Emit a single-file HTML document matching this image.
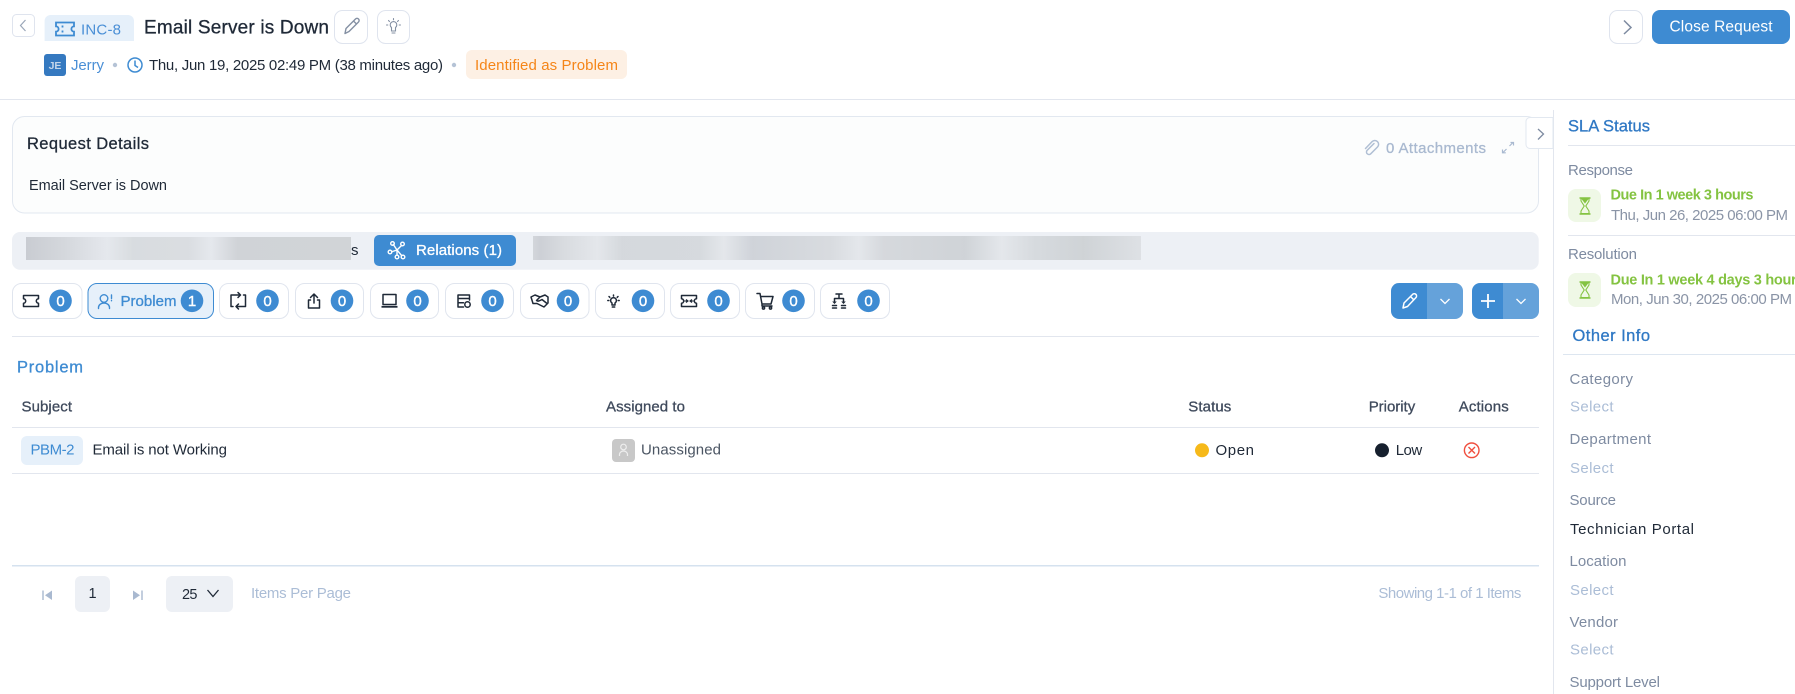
<!DOCTYPE html>
<html lang="en"><head><meta charset="utf-8"><title>INC-8 Email Server is Down</title>
<style>
html,body{margin:0;padding:0;background:#fff;width:1795px;height:694px;overflow:hidden}
svg{display:block;font-family:"Liberation Sans",sans-serif}
text{font-size:15px;fill:#1f2937}
.m{stroke-width:.3px;paint-order:stroke}
.lab{fill:#7e8ba1}.sel{fill:#abbdd6}
.ln{stroke:#e2e6ee;stroke-width:1;fill:none}
.chip{fill:#fff;stroke:#e0e5ee;stroke-width:1}
.bd{fill:#3e8bd2}
.n{fill:#fff;stroke:#fff;stroke-width:.4px;font-size:15px;text-anchor:middle}
.ic{fill:none;stroke:#1f2937;stroke-width:1.5;stroke-linecap:round;stroke-linejoin:round}
</style></head><body>
<svg width="1795" height="694" viewBox="0 0 1795 694" xmlns="http://www.w3.org/2000/svg">
<defs>
<linearGradient id="b1"><stop offset="0" stop-color="#c5c8ce"/><stop offset=".12" stop-color="#d2d5da"/><stop offset=".25" stop-color="#e4e7ec"/><stop offset=".33" stop-color="#d6dadd"/><stop offset=".5" stop-color="#d8dbdf"/><stop offset=".57" stop-color="#e4e7ec"/><stop offset=".65" stop-color="#cdd0d4"/><stop offset="1" stop-color="#ced1d4"/></linearGradient>
<linearGradient id="b2"><stop offset="0" stop-color="#d0d3d8"/><stop offset=".012" stop-color="#c9ccd2"/><stop offset=".05" stop-color="#d6d9dd"/><stop offset=".106" stop-color="#e3e6ea"/><stop offset=".146" stop-color="#d2d6da"/><stop offset=".274" stop-color="#d3d7db"/><stop offset=".314" stop-color="#e3e6ea"/><stop offset=".361" stop-color="#ccd0d6"/><stop offset=".49" stop-color="#d6d9dd"/><stop offset=".536" stop-color="#e3e6ea"/><stop offset=".576" stop-color="#d3d6da"/><stop offset=".71" stop-color="#ccd0d4"/><stop offset=".771" stop-color="#e3e6ea"/><stop offset=".825" stop-color="#d4d8dc"/><stop offset=".905" stop-color="#ccd0d3"/><stop offset="1" stop-color="#dcdfe3"/></linearGradient>
<g id="hg"><path d="M-5.500 -8H5.500M-5.500 8H5.500" stroke="#84c341" stroke-width="1.600" fill="none"/><path d="M-4 -7.500H4L4 -5L.8 0L4 5V7.500H-4V5L-.8 0L-4 -5Z" stroke="#84c341" stroke-width="1.100" fill="none"/><path d="M-3.500 -7H3.500L0 -2.500Z" fill="#84c341"/></g>
<path id="tk" d="M-9 -6.500H9V-2.600a2.600 2.600 0 0 0 0 5.200V6.500H-9V2.600a2.600 2.600 0 0 0 0-5.200ZM-2.500 -3.500V-1.500M-2.500 1.500V3.500"/>
<path id="tks" d="M-7.500 -5.500H7.500V-2.200a2.200 2.200 0 0 0 0 4.400V5.500H-7.500V2.200a2.200 2.200 0 0 0 0-4.400Z"/>
<path id="chv" d="M-4.500 -2.500L0 2L4.500 -2.500"/>
</defs>

<!-- header -->
<rect x="12.500" y="14.500" width="22" height="22" rx="4" fill="#fff" stroke="#dfe4ee"/>
<path d="M25.500 20L20.500 25.500L25.500 31" fill="none" stroke="#9aa6b8" stroke-width="1.200"/>
<path d="M44.600 41V21a6 6 0 0 1 6-6H128a6 6 0 0 1 6 6V41Z" fill="#e6f0fa"/>
<use href="#tk" x="65" y="29" fill="none" stroke="#3e8bd2" stroke-width="1.800"/>
<text x="81" y="34.500" textLength="40" style="fill:#4a8fd6">INC-8</text>
<text x="144" y="33.500" textLength="185" style="font-size:19px" class="m" stroke="#1f2937">Email Server is Down</text>
<rect x="334.500" y="10.500" width="33" height="33" rx="8" fill="#fff" stroke="#dfe4ee"/>
<path d="M345 33.500L346 28.500L355.500 19A2 2 0 0 1 358.500 22L349 31.500ZM353.500 21L356.500 24" fill="none" stroke="#8490a3" stroke-width="1.400" stroke-linejoin="round"/>
<rect x="377.500" y="10.500" width="32" height="33" rx="8" fill="#fff" stroke="#dfe4ee"/>
<path d="M391.500 27.500a3.300 3.300 0 1 1 4 0V31h-4ZM392 33h3M393.500 18.500v1.300M388.500 20.500l1 1M398.500 20.500l-1 1M386.500 25h1.300M399.200 25h1.300" fill="none" stroke="#8490a3" stroke-width="1.100" stroke-linecap="round"/>
<rect x="44" y="54" width="22" height="22" rx="3" fill="#3579c0"/>
<text x="55" y="69" text-anchor="middle" style="font-size:10.500px;fill:#c4d6ea;font-weight:700">JE</text>
<text x="71" y="70" textLength="33" style="fill:#4a8fd6">Jerry</text>
<circle cx="115" cy="65" r="2.200" fill="#b5c3d6"/>
<circle cx="135" cy="65" r="7" fill="none" stroke="#3e8bd2" stroke-width="1.500"/>
<path d="M135 60.500V65.500L138 67.500" fill="none" stroke="#3e8bd2" stroke-width="1.500"/>
<text x="149" y="70" textLength="294">Thu, Jun 19, 2025 02:49 PM (38 minutes ago)</text>
<circle cx="454" cy="65" r="2.200" fill="#b5c3d6"/>
<rect x="466" y="50" width="161" height="29" rx="6" fill="#fdf0e4"/>
<text x="475" y="70" textLength="143" style="fill:#f58518">Identified as Problem</text>
<rect x="1609.500" y="10.500" width="33" height="33" rx="8" fill="#fff" stroke="#dfe4ee"/>
<path d="M1624 20.500L1631 27.500L1624 34" fill="none" stroke="#7e8ba1" stroke-width="1.500"/>
<rect x="1652" y="10" width="138" height="34" rx="8" fill="#3e8bd2"/>
<text x="1669.500" y="31.700" textLength="103" style="fill:#fff;font-size:15.500px">Close Request</text>
<path d="M0 99.500H1795" class="ln"/>
<path d="M1553.500 110V694" class="ln"/>

<!-- request details -->
<rect x="12.500" y="116.500" width="1526" height="96.500" rx="12" fill="#fcfdfd" stroke="#e2e8f0"/>
<text x="27" y="149" textLength="122" class="m" stroke="#1f2937" style="font-size:16.500px">Request Details</text>
<text x="29" y="190" textLength="138" style="font-size:14.500px">Email Server is Down</text>
<path d="M1374 143.500L1367 150.500a2.500 2.500 0 0 0 3.500 3.500L1377.500 147a3.800 3.800 0 0 0 -5.400-5.400L1365.500 148.500" fill="none" stroke="#b0bfd4" stroke-width="1.500" stroke-linecap="round"/>
<text x="1386" y="153" textLength="100" class="m" stroke="#a9b9d0" style="fill:#a9b9d0">0 Attachments</text>
<path d="M1503 152.500L1506.500 149M1509.500 146L1513 142.500M1510.500 142.500H1513.500V145.500M1502.500 149.500V152.800H1505.800" fill="none" stroke="#a9b9d0" stroke-width="1.200"/>
<path d="M1553 117.500H1530a4 4 0 0 0 -4 4V144.500a4 4 0 0 0 4 4H1553Z" fill="#fff" stroke="#e2e8f0"/>
<path d="M1538 129L1543.500 134L1538 139.500" fill="none" stroke="#7e8ba1" stroke-width="1.300"/>

<!-- tabs -->
<rect x="12" y="232" width="1526.700" height="37.700" rx="8" fill="#edf0f5"/>
<text x="351" y="255" textLength="6">s</text>
<rect x="26" y="237" width="325" height="23" fill="url(#b1)" fill-opacity=".9"/>
<rect x="374" y="235" width="142" height="31" rx="5" fill="#3e8bd2"/>
<g fill="none" stroke="#fff" stroke-width="1.400"><path d="M397 250L393 244M397 250L402 245M397 250L391 252M397 250L397 255M397 250L402 256"/><circle cx="392.500" cy="243.500" r="1.800"/><circle cx="402.500" cy="244" r="1.800"/><circle cx="390" cy="252" r="1.800"/><circle cx="397" cy="257" r="1.800"/><circle cx="403" cy="257" r="1.800"/></g>
<text x="416" y="255" textLength="86" class="m" stroke="#fff" style="fill:#fff">Relations (1)</text>
<rect x="533" y="236" width="608" height="24" fill="url(#b2)" fill-opacity=".9"/>

<!-- chips -->
<rect class="chip" x="12.500" y="283.500" width="69.500" height="35" rx="9"/>
<use href="#tks" x="31" y="301" class="ic"/>
<circle class="bd" cx="60.500" cy="300.800" r="11.300"/><text class="n" x="60.500" y="306">0</text>

<rect x="88" y="283.500" width="125.500" height="35" rx="9" fill="#e6f0fa" stroke="#3e8bd2"/>
<g fill="none" stroke="#3e8bd2" stroke-width="1.400" stroke-linecap="round"><circle cx="104" cy="298.500" r="3.800"/><path d="M98.500 308.500v-1a5.500 4.500 0 0 1 11 0v1M111.500 295v3.500M111.500 300.500v.3"/></g>
<text x="120.500" y="306" textLength="56" class="m" stroke="#3e8bd2" style="fill:#3e8bd2">Problem</text>
<circle class="bd" cx="192" cy="300.800" r="11.300"/><text class="n" x="192" y="306">1</text>

<rect class="chip" x="219.500" y="283.500" width="69" height="35" rx="9"/>
<path class="ic" d="M231 306.500V295H240.500M238 292.500L240.500 295L238 297.500M243.500 295H245.500V306.500H236M238.500 304L236 306.500L238.500 309M231 306.500H233"/>
<circle class="bd" cx="267.500" cy="300.800" r="11.300"/><text class="n" x="267.500" y="306">0</text>

<rect class="chip" x="295.500" y="283.500" width="68" height="35" rx="9"/>
<path class="ic" d="M314 303V294M310.500 297.500L314 294L317.500 297.500M310.500 300H308.500V308H319.500V300H317.500"/>
<circle class="bd" cx="342" cy="300.800" r="11.300"/><text class="n" x="342" y="306">0</text>

<rect class="chip" x="370.500" y="283.500" width="68" height="35" rx="9"/>
<path class="ic" d="M383 294.500H396V304.500H383Z"/><path d="M381.500 306.800H397.500" stroke="#1f2937" stroke-width="1.800" fill="none"/>
<circle class="bd" cx="417.500" cy="300.800" r="11.300"/><text class="n" x="417.500" y="306">0</text>

<rect class="chip" x="445.500" y="283.500" width="68" height="35" rx="9"/>
<path class="ic" d="M469.500 300V295H458V307H463.500M458 298.500H469.500M458 302.800H463.500" stroke-width="1.300"/><circle class="ic" cx="467.500" cy="304.500" r="2.700" stroke-width="1.300"/>
<circle class="bd" cx="492.500" cy="300.800" r="11.300"/><text class="n" x="492.500" y="306">0</text>

<rect class="chip" x="520.500" y="283.500" width="68.500" height="35" rx="9"/>
<path class="ic" d="M531 297L535 295L540 297L545 295L548 297V303L544 307L537 303.500L533 303.500ZM540 297L536.500 300.500C538 302 540 300.500 542 299.500L547 303.500" stroke-width="1.300"/>
<circle class="bd" cx="568" cy="300.800" r="11.300"/><text class="n" x="568" y="306">0</text>

<rect class="chip" x="595.500" y="283.500" width="69" height="35" rx="9"/>
<path class="ic" d="M612 303a2.900 2.900 0 1 1 3 0V305H612ZM612.300 307H614.700M613.500 295V296M609 296.500L609.800 297.300M618 296.500L617.200 297.300M607.800 300.500H608.800M618.200 300.500H619.200" stroke-width="1.100"/>
<circle class="bd" cx="643" cy="300.800" r="11.300"/><text class="n" x="643" y="306">0</text>

<rect class="chip" x="670.500" y="283.500" width="69" height="35" rx="9"/>
<use href="#tks" x="689" y="301" class="ic"/><path d="M684.500 301H687.500M686 299.500L688 301L686 302.500M693.500 301H690.500M692 299.500L690 301L692 302.500" fill="none" stroke="#1f2937" stroke-width="1.100"/>
<circle class="bd" cx="718.500" cy="300.800" r="11.300"/><text class="n" x="718.500" y="306">0</text>

<rect class="chip" x="745.500" y="283.500" width="69" height="35" rx="9"/>
<path class="ic" d="M757 293.500H760L762 304H771L773 296.500H761M762 304V306H772"/><circle class="ic" cx="763.500" cy="308" r="1.100"/><circle class="ic" cx="770.500" cy="308" r="1.100"/>
<circle class="bd" cx="793.500" cy="300.800" r="11.300"/><text class="n" x="793.500" y="306">0</text>

<rect class="chip" x="820.500" y="283.500" width="69" height="35" rx="9"/>
<path class="ic" d="M836 294H842M839 294V298.500M834.500 302V298.500H843.500V302M832.500 305.500H836.500M841.500 305.500H845.500M832.500 308H836.500M841.500 308H845.500" stroke-width="1.300"/><path d="M834.500 304l-2.300-2.500h4.600ZM843.500 304l-2.300-2.500h4.600Z" fill="#1f2937"/>
<circle class="bd" cx="868.500" cy="300.800" r="11.300"/><text class="n" x="868.500" y="306">0</text>

<!-- edit/add split buttons -->
<path d="M1427 283H1399a8 8 0 0 0 -8 8V311a8 8 0 0 0 8 8H1427Z" fill="#3e8bd2"/>
<path d="M1427 283H1455a8 8 0 0 1 8 8V311a8 8 0 0 1 -8 8H1427Z" fill="#65a2da"/>
<path d="M1403 308L1404 303L1412.500 294.500A2 2 0 0 1 1416 297.500L1407.500 306.500ZM1410.500 296.500L1414 300" fill="none" stroke="#fff" stroke-width="1.500" stroke-linejoin="round"/>
<use href="#chv" x="1445" y="301.500" fill="none" stroke="#fff" stroke-width="1.300"/>
<path d="M1503 283H1480a8 8 0 0 0 -8 8V311a8 8 0 0 0 8 8H1503Z" fill="#3e8bd2"/>
<path d="M1503 283H1531a8 8 0 0 1 8 8V311a8 8 0 0 1 -8 8H1503Z" fill="#65a2da"/>
<path d="M1488 294V308M1481 301H1495" stroke="#fff" stroke-width="1.800" fill="none"/>
<use href="#chv" x="1521" y="301.500" fill="none" stroke="#fff" stroke-width="1.300"/>

<path d="M12 336.500H1539" class="ln"/>

<!-- table -->
<text x="17" y="372.700" textLength="66" class="m" stroke="#3e8bd2" style="fill:#3e8bd2;font-size:16.500px">Problem</text>
<text x="21.500" y="411.700" textLength="50.500" class="m" stroke="#3f4a5c" style="fill:#3f4a5c">Subject</text>
<text x="606" y="411.700" textLength="79" class="m" stroke="#3f4a5c" style="fill:#3f4a5c">Assigned to</text>
<text x="1188.300" y="411.700" textLength="43" class="m" stroke="#3f4a5c" style="fill:#3f4a5c">Status</text>
<text x="1368.700" y="411.700" textLength="46.500" class="m" stroke="#3f4a5c" style="fill:#3f4a5c">Priority</text>
<text x="1458.700" y="411.700" textLength="50" class="m" stroke="#3f4a5c" style="fill:#3f4a5c">Actions</text>
<path d="M12 427.500H1539" class="ln"/>
<rect x="21" y="436" width="62" height="29" rx="6" fill="#e6f0fa"/>
<text x="30.500" y="454.500" textLength="44" style="fill:#3e8bd2">PBM-2</text>
<text x="92.500" y="454.500" textLength="134.500">Email is not Working</text>
<rect x="612" y="439" width="23" height="23" rx="4" fill="#c8c8c8"/>
<g fill="none" stroke="#eeeeee" stroke-width="1.200"><circle cx="623.500" cy="447" r="2.800"/><path d="M619.500 456v-1.500a4 3.500 0 0 1 8 0V456"/></g>
<text x="641" y="454.500" textLength="80" style="fill:#4b5563">Unassigned</text>
<circle cx="1202" cy="450.300" r="7" fill="#f6b91a"/>
<text x="1215.500" y="455" textLength="38.500">Open</text>
<circle cx="1382" cy="450.300" r="7" fill="#16202e"/>
<text x="1395.700" y="455" textLength="26.500">Low</text>
<circle cx="1471.700" cy="450.300" r="7.300" fill="none" stroke="#f04e3e" stroke-width="1.400"/>
<path d="M1468.500 447L1475 453.500M1475 447L1468.500 453.500" stroke="#f04e3e" stroke-width="1.400" fill="none"/>
<path d="M12 473.500H1539" class="ln"/>

<!-- pagination -->
<path d="M12 565.700H1539" stroke="#d5e2ef" stroke-width="1.500" fill="none"/>
<path d="M43 590.500V600" stroke="#a9b9d0" stroke-width="1.400" fill="none"/><path d="M52 590.500V600L45 595.200Z" fill="#a9b9d0"/>
<rect x="75" y="576" width="35" height="36" rx="6" fill="#edf0f5"/>
<text x="92.500" y="598" text-anchor="middle" style="font-size:14.500px">1</text>
<path d="M133 590.500V600L140 595.200Z" fill="#a9b9d0"/><path d="M142 590.500V600" stroke="#a9b9d0" stroke-width="1.400" fill="none"/>
<rect x="166" y="576" width="67" height="36" rx="6" fill="#edf0f5"/>
<text x="182" y="599" textLength="15.500" style="font-size:14.500px">25</text>
<path d="M207.500 590L213 596.500L218.500 590" fill="none" stroke="#1f2937" stroke-width="1.300"/>
<text x="251" y="598" textLength="100" class="sel">Items Per Page</text>
<text x="1378.400" y="598" textLength="143" class="sel">Showing 1-1 of 1 Items</text>

<!-- right panel -->
<text x="1568" y="131.700" textLength="82" class="m" stroke="#2f78c4" style="fill:#2f78c4;font-size:16.500px">SLA Status</text>
<path d="M1568 145.500H1795" class="ln"/>
<text x="1568" y="175" textLength="65" class="lab">Response</text>
<rect x="1568" y="189" width="33" height="33" rx="8" fill="#eff8e6"/>
<use href="#hg" x="1585" y="206"/>
<text x="1610.500" y="199.500" textLength="143" style="font-weight:700;fill:#84c341;font-size:14.500px">Due In 1 week 3 hours</text>
<text x="1611" y="220" textLength="177" style="fill:#8a94a6">Thu, Jun 26, 2025 06:00 PM</text>
<path d="M1568 235.500H1795" class="ln"/>
<text x="1568" y="259" textLength="69" class="lab">Resolution</text>
<rect x="1568" y="273" width="33" height="34" rx="8" fill="#eff8e6"/>
<use href="#hg" x="1585" y="290"/>
<text x="1610.500" y="284.300" textLength="194" style="font-weight:700;fill:#84c341;font-size:14.500px">Due In 1 week 4 days 3 hours</text>
<text x="1611" y="304" textLength="181" style="fill:#8a94a6">Mon, Jun 30, 2025 06:00 PM</text>
<text x="1572.500" y="341" textLength="77.500" class="m" stroke="#2f78c4" style="fill:#2f78c4;font-size:16.500px">Other Info</text>
<path d="M1563 354.500H1795" stroke="#dde6f0" fill="none"/>
<text x="1569.500" y="384" textLength="63.500" class="lab">Category</text>
<text x="1570" y="411.700" textLength="43.500" class="sel">Select</text>
<text x="1569.500" y="444" textLength="81.500" class="lab">Department</text>
<text x="1570" y="473" textLength="43.500" class="sel">Select</text>
<text x="1569.500" y="505" textLength="46.500" class="lab">Source</text>
<text x="1570" y="534" textLength="124">Technician Portal</text>
<text x="1569.500" y="566" textLength="57" class="lab">Location</text>
<text x="1570" y="595" textLength="43.500" class="sel">Select</text>
<text x="1569.500" y="627" textLength="48.500" class="lab">Vendor</text>
<text x="1570" y="654.700" textLength="43.500" class="sel">Select</text>
<text x="1569.500" y="687" textLength="90.500" class="lab">Support Level</text>
</svg>
</body></html>
